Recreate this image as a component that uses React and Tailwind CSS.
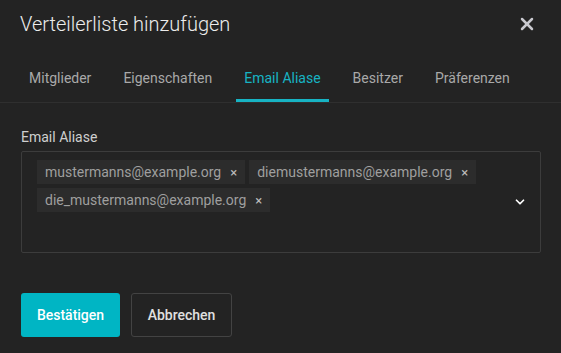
import { X, ChevronDown } from "lucide-react";

const tabs = ["Mitglieder", "Eigenschaften", "Email Aliase", "Besitzer", "Präferenzen"];
const aliases = [
  "mustermanns@example.org",
  "diemustermanns@example.org",
  "die_mustermanns@example.org",
];

export default function App() {
  return (
    <div
      className="w-[561px] h-[353px] bg-[#232323] text-[#e4e4e4] overflow-hidden"
      style={{ fontFamily: "Roboto, 'Noto Sans', sans-serif" }}
    >
      <div className="h-[54px] px-5 pb-[6px] flex items-center justify-between">
        <h2 className="text-[20px] font-light leading-7 text-[#ececec]">Verteilerliste hinzufügen</h2>
        <button type="button" className="text-[#c9c9cf] mr-[4px]">
          <X className="w-[20px] h-[20px]" strokeWidth={3} />
        </button>
      </div>

      <div className="h-[49px] pl-[21px] flex gap-4 border-b border-[#2f2f2f]">
        {tabs.map((t) => {
          const active = t === "Email Aliase";
          return (
            <div
              key={t}
              className={
                active
                  ? "h-full px-2 flex items-center text-[14px] text-[#17b3c3] border-b-[3px] border-[#17b3c3] pt-[3px]"
                  : "h-full px-2 flex items-center text-[14px] text-[#a9a9a9]"
              }
            >
              {t}
            </div>
          );
        })}
      </div>

      <div className="pl-[21px] pr-5 pt-6">
        <label className="block text-[14px] leading-5 text-[#cfcfcf] mb-[4px]">Email Aliase</label>
        <div className="h-[102px] border border-[#3c3c3c] rounded-[2px] pl-[15px] pr-[13px] pt-[8px] flex items-start">
          <div className="flex-1 flex flex-wrap gap-[4px]">
            {aliases.map((a) => (
              <span
                key={a}
                className="h-[24px] pl-2 pr-2 bg-[#2c2c2c] flex items-center gap-[9px] text-[14px] text-[#9f9f9f]"
              >
                {a}
                <span className="text-[#bdbdbd] text-[13px] leading-none">×</span>
              </span>
            ))}
          </div>
          <ChevronDown className="w-[14px] h-[14px] self-center -mt-[8px] text-white" strokeWidth={3} />
        </div>
      </div>

      <div className="pl-[21px] pt-[40px] flex gap-[11px]">
        <button
          type="button"
          className="h-[44px] w-[99px] rounded-[3px] bg-[#00b5c4] text-white text-[14px] font-medium"
        >
          Bestätigen
        </button>
        <button
          type="button"
          className="h-[44px] w-[101px] rounded-[3px] border border-[#434343] text-[#e0e0e0] text-[14px] font-medium"
        >
          Abbrechen
        </button>
      </div>
    </div>
  );
}
